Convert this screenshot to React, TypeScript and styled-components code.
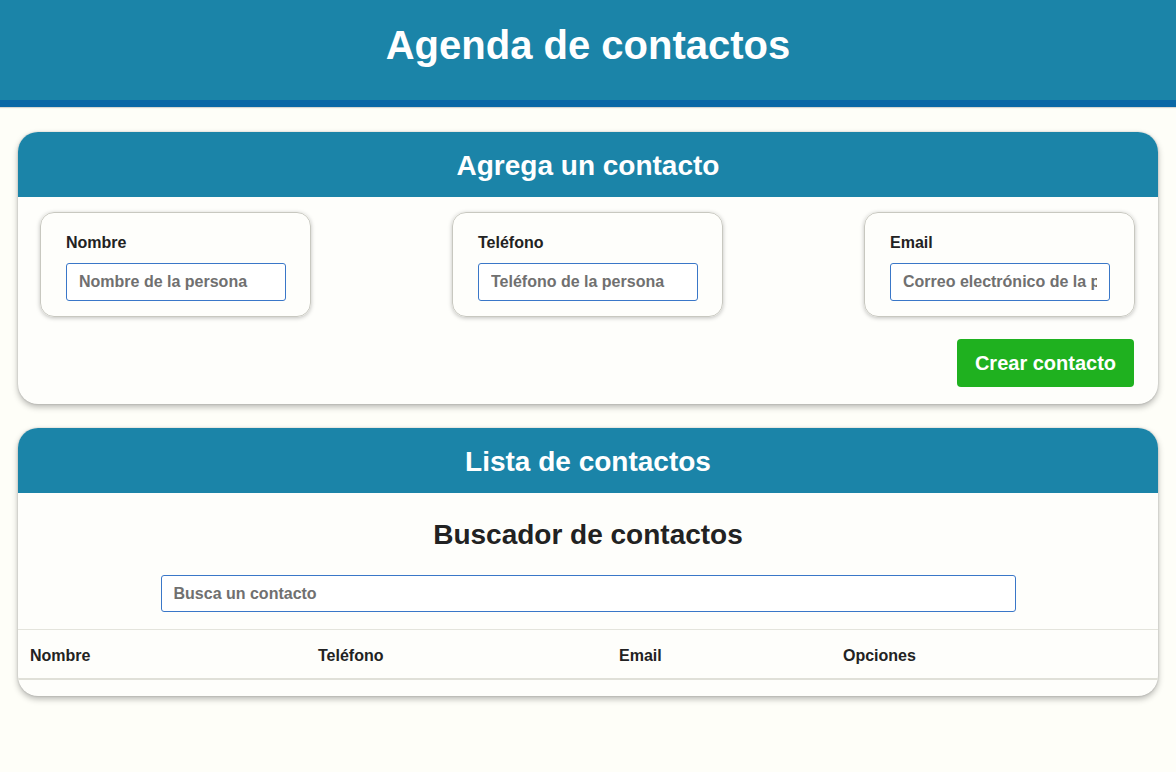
import React from "react";
import styled, { createGlobalStyle } from "styled-components";

const GlobalStyle = createGlobalStyle`
  * {
    box-sizing: border-box;
  }
  body {
    margin: 0;
    background: #fefef8;
    font-family: "Liberation Sans", Arial, Helvetica, sans-serif;
    color: #222;
  }
`;

const TEAL = "#1b84a8";

const Header = styled.header`
  height: 107px;
  background: ${TEAL};
  border-bottom: 7px solid #0a68a6;
  display: flex;
  align-items: center;
  justify-content: center;
  box-shadow: 0 1px 1px rgba(0, 0, 0, 0.15);
  & > h1 {
    margin: 0;
    color: #fff;
    font-size: 40px;
    font-weight: 700;
    padding-bottom: 10px;
  }
`;

const Main = styled.main`
  padding: 25px 18px 40px;
  display: flex;
  flex-direction: column;
  gap: 24px;
`;

const Card = styled.section`
  background: #fefefb;
  border-radius: 20px;
  overflow: hidden;
  box-shadow: 0 3px 6px rgba(0, 0, 0, 0.28), 0 0 2px rgba(0, 0, 0, 0.2);
`;

const CardTitle = styled.h2`
  margin: 0;
  height: 65px;
  background: ${TEAL};
  color: #fff;
  font-size: 28px;
  font-weight: 700;
  display: flex;
  align-items: center;
  justify-content: center;
  padding-top: 2px;
`;

const FieldRow = styled.div`
  display: flex;
  justify-content: space-between;
  padding: 15px 23px 0 22px;
`;

const FieldBox = styled.div`
  width: 271px;
  height: 105px;
  border: 1px solid #c8c8c0;
  border-radius: 14px;
  box-shadow: 0 1px 4px rgba(0, 0, 0, 0.25);
  padding: 21px 25px 0;
  display: flex;
  flex-direction: column;
  gap: 11px;
`;

const Label = styled.label`
  font-size: 16px;
  font-weight: 700;
  color: #222;
`;

const Input = styled.input<{ $wide?: boolean }>`
  width: ${(p) => (p.$wide ? "855px" : "220px")};
  height: ${(p) => (p.$wide ? "37px" : "38px")};
  border: 1px solid #3a77c8;
  border-radius: 3px;
  padding: 0 12px;
  font-family: "Liberation Sans", Arial, sans-serif;
  font-size: 16px;
  font-weight: 700;
  color: #333;
  background: #fff;
  outline: none;
  &::placeholder {
    color: #707070;
  }
`;

const Actions = styled.div`
  display: flex;
  justify-content: flex-end;
  padding: 22px 24px 17px;
`;

const CreateButton = styled.button`
  width: 177px;
  height: 48px;
  border: none;
  border-radius: 4px;
  background: #1fb11f;
  color: #fff;
  font-family: "Liberation Sans", Arial, sans-serif;
  font-size: 20px;
  font-weight: 700;
  cursor: pointer;
`;

const SearchArea = styled.div`
  display: flex;
  flex-direction: column;
  align-items: center;
  padding: 26px 0 17px;
  gap: 24px;
  & > h3 {
    margin: 0;
    font-size: 28px;
    font-weight: 700;
    color: #222;
  }
`;

const Table = styled.div`
  border-top: 1px solid #e4e4dc;
  border-bottom: 2px solid #e0e0d8;
  margin-bottom: 16px;
`;

const HeadRow = styled.div`
  display: grid;
  grid-template-columns: 288px 301px 224px 1fr;
  height: 48px;
  padding-top: 3px;
  align-items: center;
`;

const HeadCell = styled.div`
  padding: 0 12px;
  font-size: 16px;
  font-weight: 700;
  color: #222;
`;

const fields = [
  { label: "Nombre", placeholder: "Nombre de la persona" },
  { label: "Teléfono", placeholder: "Teléfono de la persona" },
  { label: "Email", placeholder: "Correo electrónico de la persona" },
];

const columns = ["Nombre", "Teléfono", "Email", "Opciones"];

export default function App() {
  return (
    <>
      <GlobalStyle />
      <Header>
        <h1>Agenda de contactos</h1>
      </Header>
      <Main>
        <Card>
          <CardTitle>Agrega un contacto</CardTitle>
          <FieldRow>
            {fields.map((f) => (
              <FieldBox key={f.label}>
                <Label>{f.label}</Label>
                <Input placeholder={f.placeholder} />
              </FieldBox>
            ))}
          </FieldRow>
          <Actions>
            <CreateButton>Crear contacto</CreateButton>
          </Actions>
        </Card>
        <Card>
          <CardTitle>Lista de contactos</CardTitle>
          <SearchArea>
            <h3>Buscador de contactos</h3>
            <Input $wide placeholder="Busca un contacto" />
          </SearchArea>
          <Table>
            <HeadRow>
              {columns.map((c) => (
                <HeadCell key={c}>{c}</HeadCell>
              ))}
            </HeadRow>
          </Table>
        </Card>
      </Main>
    </>
  );
}
